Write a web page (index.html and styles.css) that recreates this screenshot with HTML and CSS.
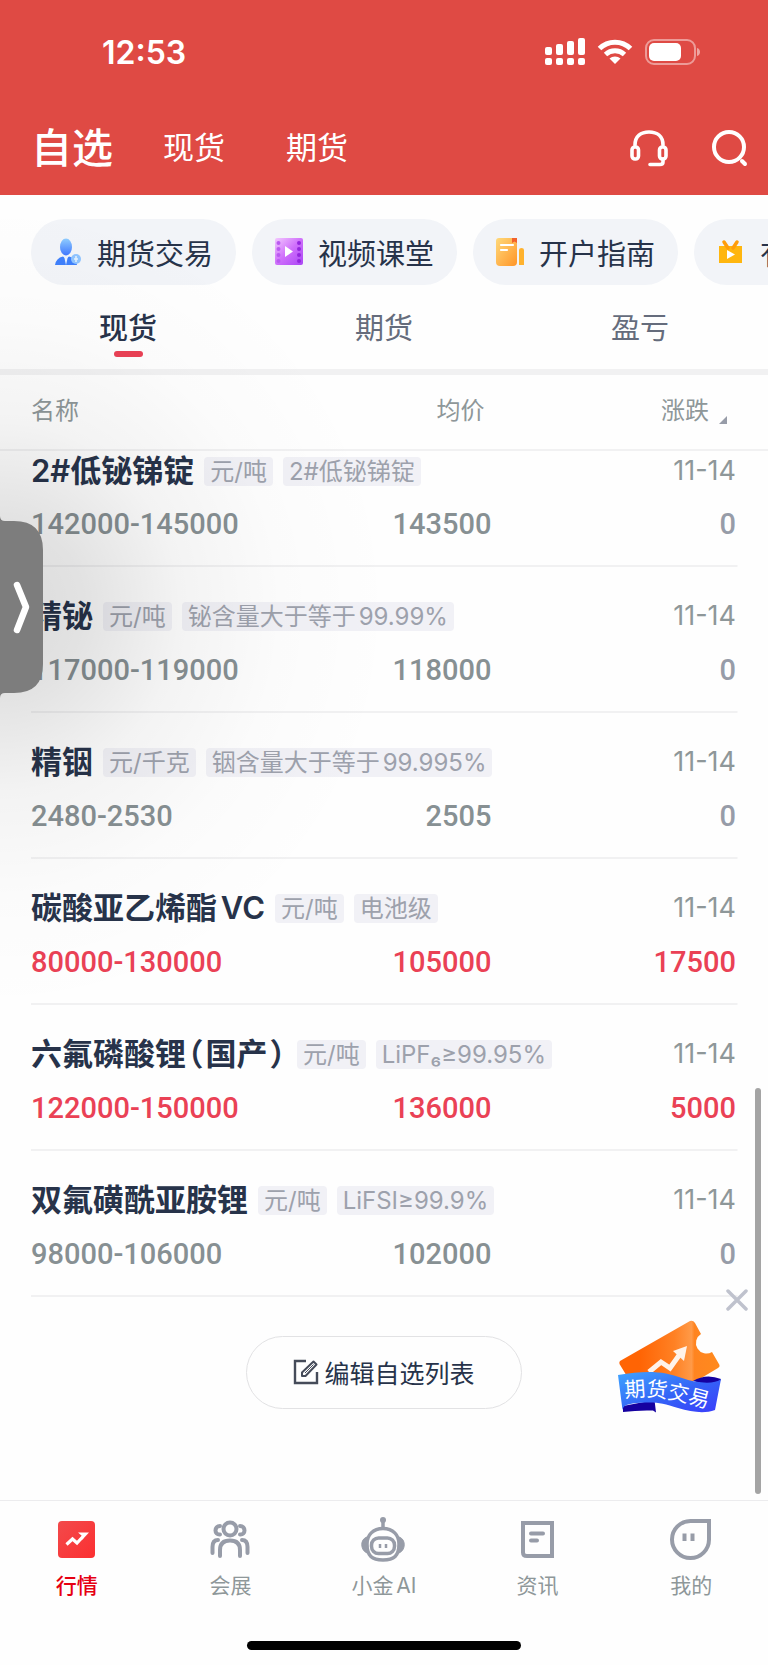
FILE: index.html
```html
<!DOCTYPE html>
<html lang="zh-CN">

<head>
    <meta charset="UTF-8">
    <meta name="viewport" content="width=device-width, initial-scale=1.0">
    <title>自选</title>
    <link rel="stylesheet" href="styles.css">
</head>

<body>
    <header class="header">
        <div class="status">
            <span class="time">12:53</span>
            <div class="status-icons">
                <svg width="40" height="28" viewBox="0 0 40 28" fill="#fff">
                    <rect x="0" y="9" width="7" height="8" rx="2"/>
                    <rect x="11" y="6" width="7" height="11" rx="2"/>
                    <rect x="22" y="3" width="7" height="14" rx="2"/>
                    <rect x="33" y="0" width="7" height="17" rx="2"/>
                    <rect x="0" y="20" width="7" height="7" rx="2"/>
                    <rect x="11" y="20" width="7" height="7" rx="2"/>
                    <rect x="22" y="20" width="7" height="7" rx="2"/>
                    <rect x="33" y="20" width="7" height="7" rx="2"/>
                </svg>
                <svg width="36" height="26" viewBox="0 0 36 26" fill="none" stroke="#fff" stroke-width="5">
                    <path d="M2.500 9.500C11 1 25 1 33.500 9.500"/>
                    <path d="M8.500 15.500C14 10.500 22 10.500 27.500 15.500"/>
                    <path d="M18 25L12.500 19.500C15.500 16.800 20.500 16.800 23.500 19.500Z" fill="#fff" stroke="none"/>
                </svg>
                <svg width="56" height="26" viewBox="0 0 56 26">
                    <rect x="1" y="1" width="49" height="24" rx="8" fill="none" stroke="#fff" stroke-opacity="0.45" stroke-width="2"/>
                    <rect x="4" y="4" width="32" height="18" rx="5" fill="#fff"/>
                    <path d="M52 9C56 10 56 16 52 17Z" fill="#fff" fill-opacity="0.5"/>
                </svg>
            </div>
        </div>
        <div class="title-bar">
            <nav class="main-nav">
                <a class="active" href="#">自选</a>
                <a href="#">现货</a>
                <a href="#">期货</a>
            </nav>
            <div class="tools">
                <button type="button" aria-label="客服">
                    <svg width="38" height="38" viewBox="0 0 38 38" fill="none" stroke="#fff" stroke-width="3.600" stroke-linecap="round">
                        <path d="M5 16C5 7 11 3 19 3S33 7 33 16"/>
                        <rect x="2" y="18" width="6.500" height="12" rx="3"/>
                        <rect x="29.500" y="18" width="6.500" height="12" rx="3"/>
                        <path d="M33 30V33Q33 35.500 30 35.500H20"/>
                    </svg>
                </button>
                <button type="button" aria-label="搜索">
                    <svg width="38" height="38" viewBox="0 0 38 38" fill="none" stroke="#fff" stroke-width="4" stroke-linecap="round">
                        <circle cx="18" cy="18" r="15"/>
                        <path d="M31 32L34 35"/>
                    </svg>
                </button>
            </div>
        </div>
    </header>

    <nav class="chips">
        <a class="chip" href="#">
            <svg width="28" height="28" viewBox="-1 0 28 28">
                <defs>
                    <linearGradient id="blue" x1="0" y1="0" x2="0" y2="1">
                        <stop offset="0" stop-color="#8fcdff"/>
                        <stop offset="1" stop-color="#3f77ff"/>
                    </linearGradient>
                </defs>
                <ellipse cx="11" cy="9" rx="6" ry="8.500" fill="url(#blue)"/>
                <path d="M0 27Q1 20 8 18.500L11 21L14 18.500Q21 20 22 27Z" fill="#3f80fb"/>
                <path d="M9 18L11 27L13 18Z" fill="#e9f1ff"/>
                <circle cx="21" cy="21" r="5" fill="#8fc4ff"/>
                <path d="M21 18V24M19 21H23" stroke="#e6f2ff" stroke-width="1.500"/>
            </svg>
            期货交易
        </a>
        <a class="chip" href="#">
            <svg width="28" height="28" viewBox="0 0 28 28">
                <defs>
                    <linearGradient id="purple" x1="0" y1="0" x2="1" y2="1">
                        <stop offset="0" stop-color="#f3c8ff"/>
                        <stop offset="0.500" stop-color="#cf6ffb"/>
                        <stop offset="1" stop-color="#aa45f5"/>
                    </linearGradient>
                </defs>
                <rect width="28" height="27" rx="2" fill="url(#purple)"/>
                <path d="M3.500 5V24" stroke="#b95af0" stroke-width="4" stroke-linecap="round" stroke-dasharray="0 6"/>
                <path d="M24 5V24" stroke="#9326dd" stroke-width="4" stroke-linecap="round" stroke-dasharray="0 6"/>
                <path d="M10 8L18 13.500L10 19Z" fill="#fff"/>
            </svg>
            视频课堂
        </a>
        <a class="chip" href="#">
            <svg width="28" height="28" viewBox="0 0 28 28">
                <defs>
                    <linearGradient id="amber" x1="0" y1="0" x2="1" y2="1">
                        <stop offset="0" stop-color="#ffd97a"/>
                        <stop offset="1" stop-color="#ff9528"/>
                    </linearGradient>
                </defs>
                <path d="M3 0H21V24Q21 28 17 28H4Q0 28 0 24V3Q0 0 3 0Z" fill="url(#amber)"/>
                <path d="M23 12Q23 10 25.500 10T28 12V27H23Z" fill="#ffb22e"/>
                <path d="M16 0H21V5L18.500 3.500L16 5Z" fill="#f2612c"/>
                <path d="M5 7H17M5 12H11" stroke="#fff" stroke-width="2.200" stroke-linecap="round"/>
            </svg>
            开户指南
        </a>
        <a class="chip" href="#">
            <svg width="28" height="28" viewBox="0 0 28 28">
                <path d="M2 8H25V25H2Z" fill="#ffb60f"/>
                <path d="M7 4L11 10M20 4L16 10" stroke="#ff9d0a" stroke-width="3.500" stroke-linecap="round"/>
                <path d="M10 12L18 16.500L10 21Z" fill="#fff"/>
            </svg>
            有色视频
        </a>
    </nav>

    <nav class="tabs">
        <a class="active" href="#">现货</a>
        <a href="#">期货</a>
        <a href="#">盈亏</a>
    </nav>

    <main>
        <table class="quotes">
            <thead>
                <tr>
                    <th class="col-name">名称</th>
                    <th class="col-avg">均价</th>
                    <th class="col-change">涨跌<span class="sort"></span></th>
                </tr>
            </thead>
            <tbody>
                <tr class="item">
                    <td colspan="2"><div class="line tight"><b>2#低铋锑锭</b><span class="tag">元/吨</span><span class="tag">2#低铋锑锭</span></div></td>
                    <td class="date">11-14</td>
                </tr>
                <tr class="values">
                    <td>142000-145000</td>
                    <td>143500</td>
                    <td>0</td>
                </tr>
            </tbody>
            <tbody>
                <tr class="item">
                    <td colspan="2"><div class="line"><b>精铋</b><span class="tag">元/吨</span><span class="tag">铋含量大于等于99.99%</span></div></td>
                    <td class="date">11-14</td>
                </tr>
                <tr class="values">
                    <td>117000-119000</td>
                    <td>118000</td>
                    <td>0</td>
                </tr>
            </tbody>
            <tbody>
                <tr class="item">
                    <td colspan="2"><div class="line"><b>精铟</b><span class="tag">元/千克</span><span class="tag">铟含量大于等于99.995%</span></div></td>
                    <td class="date">11-14</td>
                </tr>
                <tr class="values">
                    <td>2480-2530</td>
                    <td>2505</td>
                    <td>0</td>
                </tr>
            </tbody>
            <tbody>
                <tr class="item">
                    <td colspan="2"><div class="line"><b>碳酸亚乙烯酯VC</b><span class="tag">元/吨</span><span class="tag">电池级</span></div></td>
                    <td class="date">11-14</td>
                </tr>
                <tr class="values up">
                    <td>80000-130000</td>
                    <td>105000</td>
                    <td>17500</td>
                </tr>
            </tbody>
            <tbody>
                <tr class="item">
                    <td colspan="2"><div class="line"><b>六氟磷酸锂<span class="paren">（</span>国产<span class="paren">）</span></b><span class="tag">元/吨</span><span class="tag">LiPF₆≥99.95%</span></div></td>
                    <td class="date">11-14</td>
                </tr>
                <tr class="values up">
                    <td>122000-150000</td>
                    <td>136000</td>
                    <td>5000</td>
                </tr>
            </tbody>
            <tbody>
                <tr class="item">
                    <td colspan="2"><div class="line"><b>双氟磺酰亚胺锂</b><span class="tag">元/吨</span><span class="tag">LiFSI≥99.9%</span></div></td>
                    <td class="date">11-14</td>
                </tr>
                <tr class="values">
                    <td>98000-106000</td>
                    <td>102000</td>
                    <td>0</td>
                </tr>
            </tbody>
        </table>

        <button class="edit" type="button">
            <svg width="26" height="26" viewBox="0 0 26 26" fill="none" stroke="#454b59" stroke-width="2.400">
                <path d="M13 2H2V24H24V13"/>
                <path d="M9 17V13.500L20.500 2.500L23.500 5.500L12.500 17Z" stroke-width="2" stroke-linejoin="round"/>
                <path d="M12 14L20.500 5.500" stroke-width="1"/>
            </svg>
            编辑自选列表
        </button>
    </main>

    <footer class="tabbar">
        <nav class="tabbar-nav">
            <a class="active" href="#">
                <svg width="46" height="46" viewBox="0 0 46 46">
                    <defs>
                        <linearGradient id="red" x1="0" y1="0" x2="1" y2="1">
                            <stop offset="0" stop-color="#f24a4b"/>
                            <stop offset="1" stop-color="#fc2f31"/>
                        </linearGradient>
                    </defs>
                    <rect x="4" y="5" width="37" height="37" rx="4" fill="url(#red)"/>
                    <path d="M12.500 28.500L18.500 23L23 27L29 20.500" fill="none" stroke="#fff" stroke-width="3.200"/>
                    <path d="M24 16.500H35L27.500 24.500L28 20Z" fill="#fff"/>
                </svg>
                行情
            </a>
            <a href="#">
                <svg width="46" height="46" viewBox="0 0 46 46" fill="none" stroke="#979ca8" stroke-width="4" stroke-linecap="round">
                    <circle cx="23" cy="13" r="6.500"/>
                    <path d="M13 40V34C13 27 17 24.500 23 24.500S33 27 33 34V40"/>
                    <path d="M13 10C7 10 7 19 13 18.500M33 10C39 10 39 19 33 18.500"/>
                    <path d="M5.500 37V31Q5.500 24 11 24M40.500 37V31Q40.500 24 35 24"/>
                </svg>
                会展
            </a>
            <a href="#">
                <svg width="46" height="46" viewBox="0 0 46 46" fill="none" stroke="#979ca8" stroke-width="3.500">
                    <circle cx="22" cy="4" r="3" fill="#979ca8" stroke="none"/>
                    <path d="M22 5V13"/>
                    <path d="M22 12.500C32 12.500 38 19 38 28C38 40 33 44 22 44S6 40 6 28C6 19 12 12.500 22 12.500Z"/>
                    <path d="M6 21C-1 23 -1 34 6 37ZM38 21C45 23 45 34 38 37Z" fill="#979ca8" stroke-width="1"/>
                    <rect x="10.500" y="22" width="23" height="15.500" rx="7"/>
                    <path d="M19 28V32M25 28V32" stroke-width="2.500"/>
                </svg>
                小金AI
            </a>
            <a href="#">
                <svg width="46" height="46" viewBox="0 0 46 46" fill="none" stroke="#979ca8" stroke-width="4">
                    <path d="M8 7H37V40H12Q8 40 8 36.500Z"/>
                    <path d="M16 17.500H28M16 24.500H22" stroke-linecap="round"/>
                </svg>
                资讯
            </a>
            <a href="#">
                <svg width="46" height="46" viewBox="0 0 46 46" fill="none" stroke="#979ca8" stroke-width="4">
                    <path d="M22.500 5H41V23.500A18.500 18.500 0 1 1 22.500 5Z"/>
                    <path d="M16.500 17.500V25M24.500 17.500V25"/>
                </svg>
                我的
            </a>
        </nav>
        <div class="home-bar"></div>
    </footer>

    <div class="scrollbar"></div>

    <div class="shade"></div>
    <button class="handle" type="button" aria-label="展开">
        <svg width="43" height="182" viewBox="0 0 43 182">
            <path d="M0 0Q0 5 5 5H14Q43 5 43 34V148Q43 177 14 177H5Q0 177 0 182Z" fill="#7d7d7d"/>
            <path d="M17 69L26 91L17 114" fill="none" stroke="#fff" stroke-width="6.500" stroke-linecap="round" stroke-linejoin="round"/>
        </svg>
    </button>

    <div class="promo">
        <button class="close" type="button" aria-label="关闭">
            <svg width="22" height="22" viewBox="0 0 22 22" stroke="#bfc2cd" stroke-width="3.500" stroke-linecap="round">
                <path d="M2 2L20 20M20 2L2 20"/>
            </svg>
        </button>
        <a class="promo-link" href="#">
            <svg width="108" height="98" viewBox="0 0 108 98">
                <defs>
                    <linearGradient id="ticket" x1="0" y1="0" x2="1" y2="0">
                        <stop offset="0.200" stop-color="#ff6404"/>
                        <stop offset="0.550" stop-color="#ff8124"/>
                        <stop offset="0.720" stop-color="#ff9a48"/>
                        <stop offset="0.750" stop-color="#ff8420"/>
                        <stop offset="1" stop-color="#ff8a1e"/>
                    </linearGradient>
                    <linearGradient id="ribbon" x1="0" y1="0" x2="1" y2="1">
                        <stop offset="0" stop-color="#3fa4ff"/>
                        <stop offset="0.550" stop-color="#3463f6"/>
                        <stop offset="1" stop-color="#3a3cfb"/>
                    </linearGradient>
                    <path id="wave" d="M9 80C36 76 56 80 104 94"/>
                </defs>
                <path d="M4 43L74 3Q77 2 79 5L85 16A9.500 9.500 0 0 0 96 34L103.500 47Q104 49 102 50L82 62L50 70L12 60L3.500 46Q3 44 4 43Z" fill="url(#ticket)"/>
                <path d="M33 54L45 44L54 50L64 36" fill="none" stroke="#fff3ea" stroke-width="5"/>
                <path d="M57 33L71 28L68 43Z" fill="#fff3ea"/>
                <path d="M77 63Q90 55 105 61Q104 66 92 67Z" fill="#1500a0"/>
                <path d="M7 94L7 88L38.500 82L40 94.500L37 92.500Q22 92 7 94Z" fill="#1500a0"/>
                <path d="M2 57C30 52 48 53 66 60C80 65 98 67 105 61L99 92C88 96 76 94 62 90C48 85 40 84 30 84.500C16 85 7 86 6.500 92Z" fill="url(#ribbon)"/>
                <text class="promo-text"><textPath href="#wave">期货交易</textPath></text>
            </svg>
        </a>
    </div>
</body>

</html>
```

FILE: styles.css
```css
* {
    box-sizing: border-box;
}

body {
    margin: 0;
    position: relative;
    display: flex;
    flex-direction: column;
    min-height: 100vh;
    background-color: #fefefe;
    color: #27334a;
    font-family: Inter, "Noto Sans CJK SC", sans-serif;
    text-autospace: normal;
    overflow-x: hidden;
}

a {
    color: inherit;
    text-decoration: none;
}

button {
    margin: 0;
    padding: 0;
    border: 0;
    background: none;
    color: inherit;
    font-family: inherit;
}

svg {
    display: block;
    flex: none;
}

/* header */
.header {
    height: 195px;
    background-color: #df4a44;
    color: #fff;
}

.status {
    display: flex;
    align-items: center;
    justify-content: space-between;
    height: 104px;
    padding: 0 67px 0 102px;
}

.time {
    font-size: 32px;
    font-weight: 600;
}

.status-icons {
    display: flex;
    align-items: center;
    gap: 12px;
}

.title-bar {
    display: flex;
    align-items: center;
    justify-content: space-between;
    height: 88px;
    padding: 0 19px 0 31px;
}

.main-nav {
    display: flex;
    align-items: center;
    gap: 61px;
    padding-bottom: 6px;
    font-size: 31px;
}

.main-nav .active {
    margin-right: -11px;
    font-size: 41px;
    font-weight: 500;
}

.tools {
    display: flex;
    gap: 43px;
}

/* shortcuts */
.chips {
    display: flex;
    gap: 16px;
    padding: 24px 0 0 31px;
    overflow: hidden;
}

.chip {
    display: flex;
    flex: none;
    align-items: center;
    width: 205px;
    height: 66px;
    padding: 0 0 1px 23px;
    gap: 15px;
    border-radius: 33px;
    background-color: #f2f4f8;
    font-size: 29px;
    white-space: nowrap;
}

/* tabs */
.tabs {
    display: flex;
    height: 90px;
    border-bottom: 6px solid #f1f1f2;
    color: #656c7c;
    font-size: 29px;
    line-height: 40px;
    text-align: center;
}

.tabs a {
    flex: 1;
    padding-top: 24px;
}

.tabs .active {
    color: #27334a;
    font-weight: 500;
}

.tabs .active::after {
    content: "";
    display: block;
    width: 29px;
    height: 6px;
    margin: 2px auto 0;
    border-radius: 3px;
    background-color: #ea4155;
}

/* quotes */
.quotes {
    width: 100%;
    border-spacing: 0;
    table-layout: fixed;
}

.quotes th {
    height: 76px;
    padding: 0 0 7px;
    border-bottom: 2px solid #f1f1f2;
    color: #8e9799;
    font-size: 24px;
    font-weight: 400;
    text-align: left;
}

.quotes td {
    padding: 0;
}

.quotes th:first-child,
.quotes td:first-child {
    padding-left: 31px;
}

.quotes .col-name {
    width: 34%;
}

.quotes .col-avg {
    width: 30%;
    padding-right: 7px;
    text-align: right;
}

.quotes .col-change {
    padding-right: 41px;
    text-align: right;
}

.sort {
    display: inline-block;
    margin: 0 0 -5px 10px;
    border-left: 8px solid transparent;
    border-bottom: 8px solid #979ca8;
}

.item td {
    height: 68px;
    padding: 31px 0 1px;
}

thead + tbody .item td {
    height: 38px;
    padding: 2px 0 0;
}

.line {
    display: flex;
    align-items: center;
    gap: 10px;
    height: 36px;
    white-space: nowrap;
}

.tight {
    text-autospace: no-autospace;
}

.line b {
    font-size: 31px;
    font-weight: 600;
    line-height: 36px;
}

.paren {
    margin: 0 2px;
    font-feature-settings: "halt";
}

.tag {
    padding: 0 6px;
    border-radius: 4px;
    background-color: #f1f1f6;
    color: #9da1ac;
    font-size: 24px;
    line-height: 29px;
}

.quotes .item .date {
    padding-right: 32px;
    color: #8e9799;
    font-size: 27px;
    line-height: 36px;
    text-align: right;
}

.values {
    background: linear-gradient(#f1f1f2, #f1f1f2) no-repeat center bottom / calc(100% - 62px) 2px;
    color: #879093;
}

.values td {
    height: 78px;
    padding: 20px 0 28px;
    font-family: Roboto, sans-serif;
    font-size: 29px;
    font-weight: 500;
    line-height: 30px;
    text-align: right;
    white-space: nowrap;
}

.values td:first-child {
    text-align: left;
}

.values td:last-child {
    padding-right: 32px;
    color: #979ca8;
}

.up,
.up td:last-child {
    color: #ea4155;
}

.edit {
    display: flex;
    align-items: center;
    justify-content: center;
    gap: 5px;
    width: 276px;
    height: 73px;
    margin: 39px auto;
    padding-bottom: 2px;
    border: 1px solid #e2e2e4;
    border-radius: 37px;
    font-size: 25px;
}

/* bottom bar */
.tabbar {
    margin-top: auto;
    padding: 15px 0;
    border-top: 1px solid #ececee;
}

.tabbar-nav {
    display: flex;
    color: #8e9799;
    font-size: 21px;
    line-height: 30px;
}

.tabbar-nav a {
    display: flex;
    flex: 1;
    flex-direction: column;
    align-items: center;
    gap: 9px;
}

.tabbar-nav .active {
    color: #e60012;
    font-weight: 500;
}

.home-bar {
    width: 274px;
    height: 9px;
    margin: 40px auto 0;
    border-radius: 5px;
    background-color: #000;
}

/* things that float over the page */
.scrollbar {
    position: absolute;
    right: 7px;
    bottom: 171px;
    width: 6px;
    height: 406px;
    border-radius: 3px;
    background-color: #a4a4a4;
}

.shade {
    position: absolute;
    left: 0;
    top: 195px;
    width: 400px;
    height: 824px;
    background: radial-gradient(ellipse at left, rgba(0, 0, 0, 0.14), rgba(0, 0, 0, 0.11) 15%, rgba(0, 0, 0, 0.045) 32%, rgba(0, 0, 0, 0.01) 50%, rgba(0, 0, 0, 0) 70%);
    pointer-events: none;
}

.handle {
    position: absolute;
    left: 0;
    top: 516px;
}

.promo {
    position: absolute;
    right: 20px;
    bottom: 249px;
    display: flex;
    flex-direction: column;
    align-items: flex-end;
    gap: 7px;
}

.promo-link {
    margin-right: 24px;
}

.promo-text {
    fill: #fff;
    font-size: 21px;
}
```
